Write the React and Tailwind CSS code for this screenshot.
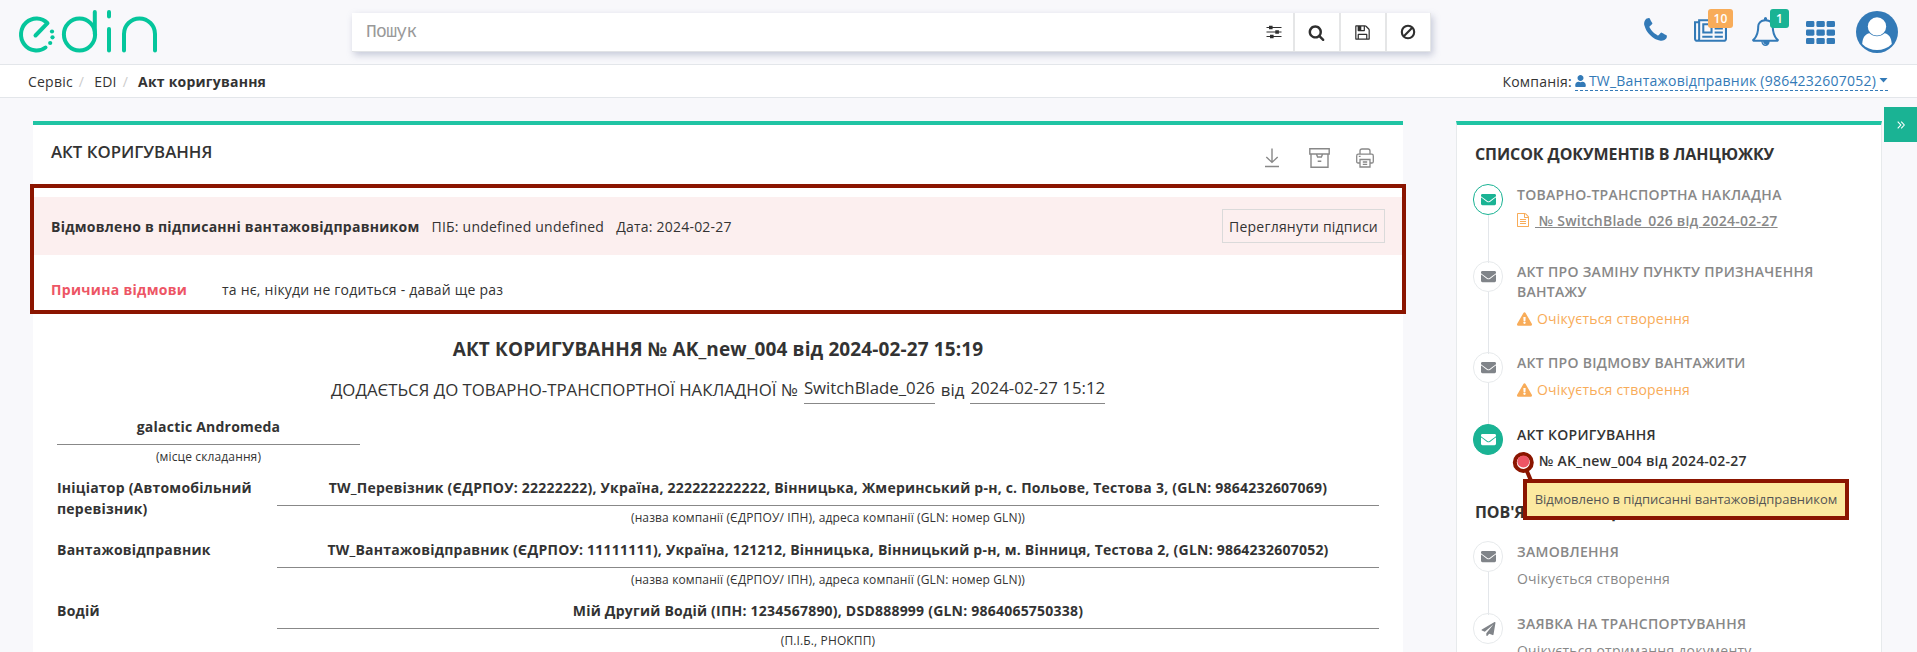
import React from "react";
import { FaEnvelope, FaPaperPlane, FaExclamationTriangle, FaUser } from "react-icons/fa";

function Glyph({ d, className, wide }) {
  return (
    <svg viewBox={wide ? "0 0 2048 1792" : "0 0 1792 1792"} className={className} fill="currentColor">
      <path d={d} />
    </svg>
  );
}

const PHONE =
  "M1600 1240q0 27-10 70.5t-21 68.5q-21 50-122 106-94 51-186 51-27 0-52.5-3.5t-57.5-12.5-47.5-14.5-55.5-20.5-49-18q-98-35-175-83-128-79-264.5-215.5t-215.5-264.5q-48-77-83-175-3-9-18-49t-20.5-55.5-14.5-47.5-12.5-57.5-3.5-52.5q0-92 51-186 56-101 106-122 25-11 68.5-21t70.5-10q14 0 21 3 18 6 53 76 11 19 30 54t35 63.5 31 53.5q3 4 17.5 25t21.5 35.5 7 28.5q0 20-28.5 50t-62 55-62 53-28.5 46q0 9 5 22.5t8.5 20.5 14 24 11.5 19q76 137 174 235t235 174q2 1 19 11.5t24 14 20.5 8.5 22.5 5q18 0 46-28.5t53-62 55-62 50-28.5q14 0 28.5 7t35.5 21.5 25 17.5q25 15 53.5 31t63.5 35 54 30q70 35 76 53 3 7 3 21z";
const NEWS =
  "M1024 512h-384v384h384v-384zm128 640v128h-640v-128h640zm0-768v640h-640v-640h640zm640 768v128h-512v-128h512zm0-256v128h-512v-128h512zm0-256v128h-512v-128h512zm0-256v128h-512v-128h512zm-1536 960v-960h-128v960q0 26 19 45t45 19 45-19 19-45zm1664 0v-1088h-1536v1088q0 33-11 64h1483q26 0 45-19t19-45zm128-1216v1216q0 80-56 136t-136 56h-1664q-80 0-136-56t-56-136v-1088h256v-128h1792z";
const BELL =
  "M912 1696q0-16-16-16-59 0-101.5-42.5t-42.5-101.5q0-16-16-16t-16 16q0 73 51.5 124.5t124.5 51.5q16 0 16-16zm-666-288h1300q-266-300-266-832 0-51-24-105t-69-103-121.5-80.5-169.5-31.5-169.5 31.5-121.5 80.5-69 103-24 105q0 532-266 832zm1482 0q0 52-38 90t-90 38h-448q0 106-75 181t-181 75-181-75-75-181h-448q-52 0-90-38t-38-90q50-42 91-88t85-119.5 74.5-158.5 50-206 19.5-260q0-152 117-282.5t307-158.5q-8-19-8-39 0-40 28-68t68-28 68 28 28 68q0 20-8 39 190 28 307 158.5t117 282.5q0 139 19.5 260t50 206 74.5 158.5 85 119.5 91 88z";
const SAVE =
  "M512 1536h768v-384h-768v384zm896 0h128v-896q0-14-10-38.5t-20-34.5l-281-281q-10-10-34-20t-39-10v416q0 40-28 68t-68 28h-576q-40 0-68-28t-28-68v-416h-128v1280h128v-416q0-40 28-68t68-28h832q40 0 68 28t28 68v416zm-384-928v-320q0-13-9.5-22.5t-22.5-9.5h-192q-13 0-22.5 9.5t-9.5 22.5v320q0 13 9.5 22.5t22.5 9.5h192q13 0 22.5-9.5t9.5-22.5zm640 32v928q0 40-28 68t-68 28h-1344q-40 0-68-28t-28-68v-1344q0-40 28-68t68-28h928q40 0 88 20t76 48l280 280q28 28 48 76t20 88z";
const SEARCH =
  "M1216 832q0-185-131.5-316.5t-316.5-131.5-316.5 131.5-131.5 316.5 131.5 316.5 316.5 131.5 316.5-131.5 131.5-316.5zm512 832q0 52-38 90t-90 38q-54 0-90-38l-343-342q-179 124-399 124-143 0-273.5-55.5t-225-150-150-225-55.5-273.5 55.5-273.5 150-225 225-150 273.5-55.5 273.5 55.5 225 150 150 225 55.5 273.5q0 220-124 399l343 343q37 37 37 90z";
const FILE =
  "M1596 380q28 28 48 76t20 88v1152q0 40-28 68t-68 28h-1344q-40 0-68-28t-28-68v-1600q0-40 28-68t68-28h896q40 0 88 20t76 48zm-444-244v376h376q-10-29-22-41l-313-313q-12-12-41-22zm384 1528v-1024h-416q-40 0-68-28t-28-68v-416h-768v1536h1280zm-1024-864q0-14 9-23t23-9h704q14 0 23 9t9 23v64q0 14-9 23t-23 9h-704q-14 0-23-9t-9-23v-64zm736 224q14 0 23 9t9 23v64q0 14-9 23t-23 9h-704q-14 0-23-9t-9-23v-64q0-14 9-23t23-9h704zm0 256q14 0 23 9t9 23v64q0 14-9 23t-23 9h-704q-14 0-23-9t-9-23v-64q0-14 9-23t23-9h704z";

function Logo() {
  return (
    <svg viewBox="0 0 150 50" className="mt-[6px] ml-[14px] h-[50px] w-[150px]" fill="none" stroke="#05c69c" strokeWidth="4" strokeLinecap="round" strokeLinejoin="round">
      <path d="M21.5 29.5 L33.5 17.2 A15.5 16 0 1 0 31.5 41.5" />
      <g fill="#05c69c" stroke="none">
        <circle cx="38" cy="25.5" r="2.1" />
        <circle cx="38.5" cy="31.3" r="2.1" />
        <circle cx="36.2" cy="37" r="2.1" />
      </g>
      <ellipse cx="65.5" cy="28.5" rx="15.6" ry="16" />
      <path d="M80.8 6 V28 M95 6 V10.5 M95 23 V44.5 M110 44.5 V28 A15.5 15.6 0 0 1 141 28 V44.5" />
    </svg>
  );
}

function SearchButton({ children, className }) {
  return <button className={"flex h-full items-center justify-center text-[#2f2f2f] " + className}>{children}</button>;
}

function Header() {
  return (
    <header className="flex h-[65px] border-b border-[#e3e6ea]">
      <div className="w-[352px]">
        <Logo />
      </div>
      <div className="mt-[13px] flex h-[39px] w-[1079px] border-b border-[#e1e3e6] bg-white shadow-[2px_3px_7px_rgba(120,130,165,0.4)]">
        <div className="flex-1 pl-[14px] font-['Liberation_Mono',monospace] text-[18px] leading-[38px] tracking-[-0.7px] text-[#999]">Пошук</div>
        <SearchButton className="w-[38px]">
          <svg viewBox="0 0 16 16" className="h-4 w-4" stroke="currentColor" fill="currentColor">
            <path d="M0.5 3.5H15.5M0.5 8H15.5M0.5 12.5H15.5" strokeWidth="1.2" />
            <path d="M3 1.7h3.6v3.6H3zM9.3 6.2h3.6v3.6H9.3zM4 10.7h3.6v3.6H4z" stroke="none" />
          </svg>
        </SearchButton>
        <SearchButton className="w-[46px] border-l-2 border-[#e5e6e7] pr-px">
          <Glyph d={SEARCH} className="h-[17px] w-[17px]" />
        </SearchButton>
        <SearchButton className="w-[46px] border-l-2 border-[#e5e6e7] pr-px">
          <Glyph d={SAVE} className="h-[17px] w-[17px]" />
        </SearchButton>
        <SearchButton className="w-[46px] border-x-2 border-r-[1px] border-[#e5e6e7] pr-px">
          <svg viewBox="0 0 16 16" className="h-4 w-4" stroke="currentColor" fill="none" strokeWidth="2.1">
            <circle cx="8" cy="8" r="6.2" />
            <path d="M3.8 12.2L12.2 3.8" />
          </svg>
        </SearchButton>
      </div>
      <div className="flex text-[#337ab7]">
        <Glyph d={PHONE} className="mt-[16px] ml-[210px] h-[29px] w-[29px]" />
        <div className="relative mt-[17px] ml-[24px] h-[29px] w-[33px]">
          <Glyph wide d={NEWS} className="h-[29px] w-[33px]" />
          <span className="absolute top-[-8px] left-[14px] h-[19px] w-[25px] rounded-[3px] bg-[#f8ac59] text-center text-[12px] leading-[19px] font-semibold text-white">10</span>
        </div>
        <div className="relative mt-[17px] ml-[24px] h-[29px] w-[29px]">
          <Glyph d={BELL} className="h-[29px] w-[29px]" />
          <span className="absolute top-[-8px] left-[19px] h-[19px] w-[19px] rounded-[3px] bg-[#1ab394] text-center text-[12px] leading-[19px] font-semibold text-white">1</span>
        </div>
        <svg viewBox="0 0 29 23" className="mt-[21px] ml-[26px] h-[23px] w-[29px]" fill="currentColor">
          {[0, 8.6, 17].map((y) => [0, 10.4, 20.6].map((x) => <rect key={x + "-" + y} x={x} y={y} width="8.4" height="6.1" rx="1.4" />))}
        </svg>
        <svg viewBox="0 0 42 42" className="mt-[11px] ml-[21px] h-[42px] w-[42px]">
          <circle cx="21" cy="21" r="21" fill="currentColor" />
          <path d="M6.2 33 C6.6 26.5 9.5 22.8 13.5 22.3 C17.5 26.3 24.5 26.3 28.5 22.3 C32.5 22.8 35.4 26.5 35.8 33 C28 41 14 41 6.2 33Z" fill="#fff" />
          <circle cx="21" cy="15.4" r="9.2" fill="#fff" />
        </svg>
      </div>
    </header>
  );
}

function Breadcrumbs() {
  return (
    <nav className="flex h-[33px] items-center justify-between border-b border-[#e3e6ea] bg-white pr-[29px] pl-7 text-[14px]">
      <div className="flex">
        <span>Сервіс</span>
        <span className="ml-[6px] text-[#ccc]">/</span>
        <span className="ml-[10px]">EDI</span>
        <span className="ml-[6px] text-[#ccc]">/</span>
        <span className="ml-[10px] font-bold">Акт коригування</span>
      </div>
      <div className="flex items-center">
        <span>Компанія:</span>
        <span className="ml-[3px] flex h-[20px] items-center border-b border-dashed border-[#337ab7] text-[#337ab7]">
          <FaUser className="mr-[3px] h-3 w-[11px]" />
          TW_Вантажовідправник (9864232607052)
          <svg viewBox="0 0 8 5" className="ml-[3px] h-[5px] w-[9px]" fill="currentColor">
            <path d="M0 0H8L4 4.6Z" />
          </svg>
        </span>
      </div>
    </nav>
  );
}

function ToolIcons() {
  return (
    <div className="flex items-center text-[#888]">
      <svg viewBox="0 0 16 20" className="h-5 w-4" fill="none" stroke="currentColor" strokeWidth="1.4">
        <path d="M8 0.5V14M2.3 9L8 14.4L13.7 9M1 18.5H15" />
      </svg>
      <svg viewBox="0 0 21 20" className="ml-[29px] h-5 w-[21px]" fill="none" stroke="currentColor" strokeWidth="1.4">
        <path d="M0.8 0.8H20.2V6H0.8ZM2 6V19.2H19V6M7.5 6.3L8.6 9H12.4L13.5 6.3M8.7 13.3H12.3" />
      </svg>
      <svg viewBox="0 0 18 20" className="ml-[26px] h-5 w-[18px]" fill="none" stroke="currentColor" strokeWidth="1.3">
        <path d="M4 6V3Q4 1 6 1H12Q14 1 14 3V6M4 15H2.2Q0.7 15 0.7 13.4V8Q0.7 6.2 2.2 6.2H15.8Q17.3 6.2 17.3 8V13.4Q17.3 15 15.8 15H14M4 11.5H14V19H4ZM6.8 14H11.2M6.8 16.3H11.2M2.8 8.3H4.6" />
      </svg>
    </div>
  );
}

const PARTIES = [
  ["Ініціатор (Автомобільний перевізник)", "TW_Перевізник (ЄДРПОУ: 22222222), Україна, 222222222222, Вінницька, Жмеринський р-н, с. Польове, Тестова 3, (GLN: 9864232607069)", "(назва компанії (ЄДРПОУ/ ІПН), адреса компанії (GLN: номер GLN))"],
  ["Вантажовідправник", "TW_Вантажовідправник (ЄДРПОУ: 11111111), Україна, 121212, Вінницька, Вінницький р-н, м. Вінниця, Тестова 2, (GLN: 9864232607052)", "(назва компанії (ЄДРПОУ/ ІПН), адреса компанії (GLN: номер GLN))"],
  ["Водій", "Мій Другий Водій (ІПН: 1234567890), DSD888999 (GLN: 9864065750338)", "(П.І.Б., РНОКПП)"],
];

function Document() {
  return (
    <main className="relative mt-[23px] ml-[33px] h-[600px] w-[1370px] shrink-0 border-t-4 border-[#20c4a4] bg-white">
      <div className="flex h-[72px] items-start justify-between pr-[29px] pl-[18px]">
        <h1 className="mt-[15px] text-[16.8px] leading-6 font-semibold tracking-[0px]">АКТ КОРИГУВАННЯ</h1>
        <div className="mt-[23px]">
          <ToolIcons />
        </div>
      </div>
      <div className="flex h-[58px] items-center bg-[#fcefef] pr-[18px] pl-[18px] text-[14px]">
        <span className="font-bold tracking-[0.26px]">Відмовлено в підписанні вантажовідправником</span>
        <span className="ml-3">ПІБ: undefined undefined</span>
        <span className="ml-3">Дата: 2024-02-27</span>
        <button className="ml-auto h-[34px] w-[163px] border border-[#dadada] text-center">Переглянути підписи</button>
      </div>
      <div className="flex h-[70px] items-center pb-px pl-[18px] text-[14px]">
        <span className="w-[171px] font-bold tracking-[0.3px] text-[#ed5565]">Причина відмови</span>
        <span>та нє, нікуди не годиться - давай ще раз</span>
      </div>
      <h2 className="mt-[12px] text-center text-[19px] leading-[24px] font-bold tracking-[0.12px]">АКТ КОРИГУВАННЯ № AK_new_004 від 2024-02-27 15:19</h2>
      <div className="mt-[14px] flex h-[29px] items-start justify-center text-[16.8px] leading-[25px] tracking-[0px]">
        <span className="pt-[2px]">ДОДАЄТЬСЯ ДО ТОВАРНО-ТРАНСПОРТНОЇ НАКЛАДНОЇ №</span>
        <span className="ml-[6px] h-[29px] border-b border-[#888]">SwitchBlade_026</span>
        <span className="mx-[6px] pt-[2px]">від</span>
        <span className="h-[29px] border-b border-[#888]">2024-02-27 15:12</span>
      </div>
      <div className="mt-[12px] ml-6 w-[303px] text-center">
        <div className="h-[29px] border-b border-[#888] text-[14px] leading-[21px] font-bold">galactic Andromeda</div>
        <div className="mt-[3px] text-[12px] leading-[18px] tracking-[0.13px]">(місце складання)</div>
      </div>
      <div className="mt-[11px] ml-6 flex w-[1322px] flex-col">
        {PARTIES.map(([label, value, note]) => (
          <div key={label} className="flex h-[61.5px]">
            <div className="w-[220px] pr-3 text-[14px] leading-[21px] font-bold">{label}</div>
            <div className="flex-1 text-center">
              <div className="h-[29px] border-b border-[#888] text-[14px] leading-[21px] font-bold">{value}</div>
              <div className="mt-[3px] text-[12px] leading-[18px] tracking-[0.13px]">{note}</div>
            </div>
          </div>
        ))}
      </div>
      <div className="absolute top-[59px] left-[-3px] h-[130px] w-[1376px] border-4 border-[#8b1500]" />
    </main>
  );
}

function Step({ title, children, heightClass, circleClass, titleClass, icon, last }) {
  return (
    <div className={"flex " + heightClass}>
      <div className="-mt-px flex w-[30px] shrink-0 flex-col items-center">
        <div className={"flex h-[31px] w-[30px] shrink-0 items-center justify-center rounded-full border " + circleClass}>{icon || <FaEnvelope className="h-[15px] w-[15px]" />}</div>
        {!last && <div className="-mb-px w-px flex-1 bg-[#e3e6ea]" />}
      </div>
      <div className="ml-[14px] w-[320px] text-[14px] leading-5">
        <div className={"font-semibold tracking-[0.29px] " + titleClass}>{title}</div>
        {children}
      </div>
    </div>
  );
}

const GREY = "border-[#e7eaec] text-[#808489]";

function Waiting() {
  return (
    <div className="mt-[7px] flex items-center text-[#f8ac59]">
      <FaExclamationTriangle className="mr-[5px] mb-[1px] h-[14px] w-[15px]" />
      Очікується створення
    </div>
  );
}

function Sidebar() {
  return (
    <aside className="relative mt-[23px] ml-[53px] h-[600px] w-[426px] shrink-0 border border-t-4 border-[#e7eaec] border-t-[#20c4a4] bg-white pl-4">
      <h3 className="mt-[17px] ml-[2px] text-[16px] leading-6 font-bold tracking-[-0.08px]">СПИСОК ДОКУМЕНТІВ В ЛАНЦЮЖКУ</h3>
      <div className="mt-[19px]">
        <Step title="ТОВАРНО-ТРАНСПОРТНА НАКЛАДНА" heightClass="h-[77px]" circleClass="border-[#1ab394] text-[#1ab394]" titleClass="text-[#888]">
          <div className="mt-[6px] flex text-[#888]">
            <Glyph d={FILE} className="mt-[2px] -ml-px h-[14px] w-[14px] text-[#f8ac59]" />
            <span className="ml-[5px] font-semibold whitespace-pre underline">{" № SwitchBlade_026 від 2024-02-27"}</span>
          </div>
        </Step>
        <Step title="АКТ ПРО ЗАМІНУ ПУНКТУ ПРИЗНАЧЕННЯ ВАНТАЖУ" heightClass="h-[91px]" circleClass={GREY} titleClass="text-[#888]">
          <Waiting />
        </Step>
        <Step title="АКТ ПРО ВІДМОВУ ВАНТАЖИТИ" heightClass="h-[72px]" circleClass={GREY} titleClass="text-[#888]">
          <Waiting />
        </Step>
        <Step last title="АКТ КОРИГУВАННЯ" heightClass="h-[75px]" circleClass="border-[#1ab394] bg-[#1ab394] text-white" titleClass="">
          <div className="mt-[6px] pl-[22px] font-semibold">№ AK_new_004 від 2024-02-27</div>
        </Step>
      </div>
      <h3 className="ml-[2px] text-[16px] leading-6 font-bold tracking-[-0.08px]">ПОВ'ЯЗАНІ ЛАНЦЮЖКИ</h3>
      <div className="mt-[18px]">
        <Step title="ЗАМОВЛЕННЯ" heightClass="h-[72px]" circleClass={GREY} titleClass="text-[#888]">
          <div className="mt-[7px] text-[#888]">Очікується створення</div>
        </Step>
        <Step last title="ЗАЯВКА НА ТРАНСПОРТУВАННЯ" heightClass="h-[72px]" circleClass={GREY} titleClass="text-[#888]" icon={<FaPaperPlane className="h-[14px] w-[15px]" />}>
          <div className="mt-[7px] text-[#888]">Очікується отримання документу</div>
        </Step>
      </div>
      <svg viewBox="0 0 24 36" className="absolute top-[324px] left-[55px] h-9 w-6" fill="none">
        <path d="M14 20L20 34" stroke="#8b1500" strokeWidth="4" />
        <circle cx="11.3" cy="13.4" r="8.5" fill="#fff" stroke="#8b1500" strokeWidth="4" />
        <circle cx="11.3" cy="12.4" r="6" fill="#ed5565" />
      </svg>
      <div className="absolute top-[354px] left-[66px] flex h-[41px] w-[326px] items-center justify-center border-4 border-[#8b1500] bg-[#fce9a0] pt-px text-[13px] tracking-[-0.03px] whitespace-nowrap text-[#555]">Відмовлено в підписанні вантажовідправником</div>
    </aside>
  );
}

export default function App() {
  return (
    <div className="flex h-[652px] w-[1917px] flex-col overflow-hidden bg-[#f8f8fb] font-['Open_Sans','Noto_Sans',sans-serif] tracking-[0.22px] text-[#333]">
      <Header />
      <Breadcrumbs />
      <div className="flex min-h-0 flex-1 items-start overflow-hidden">
        <Document />
        <Sidebar />
        <button className="mt-[9px] ml-[2px] flex h-[35px] w-[33px] shrink-0 items-center justify-center bg-[#1ab394] text-white">
          <svg viewBox="0 0 8 8" className="h-2 w-2" fill="none" stroke="currentColor" strokeWidth="1.1">
            <path d="M0.7 0.6L3.8 4L0.7 7.4M4.2 0.6L7.3 4L4.2 7.4" />
          </svg>
        </button>
      </div>
    </div>
  );
}
